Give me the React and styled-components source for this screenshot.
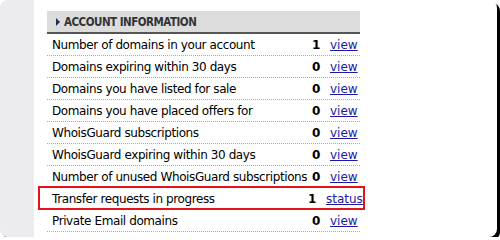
import React from "react";
import styled, { createGlobalStyle } from "styled-components";

const GlobalStyle = createGlobalStyle`
  html, body {
    margin: 0;
    padding: 0;
    background: #fff;
  }
`;

const Frame = styled.div`
  width: 497px;
  height: 237px;
  border-radius: 8px;
  box-shadow: 3px 3px 0 #000;
  overflow: hidden;
  display: flex;
  background: #fff;
  font-family: "DejaVu Sans", Verdana, sans-serif;
`;

const Sidebar = styled.div`
  width: 34px;
  background: #ececee;
`;

const Content = styled.div`
  padding: 11px 0 0 13px;
`;

const Panel = styled.div`
  width: 313px;
`;

const Header = styled.div`
  height: 21px;
  background: #dcdcdc;
  border-bottom: 2px solid #555;
  display: flex;
  align-items: center;
  padding-left: 9px;
  gap: 4px;
  font-family: "DejaVu Sans Condensed", "DejaVu Sans", sans-serif;
  font-size: 11.5px;
  letter-spacing: -0.5px;
  font-weight: bold;
  color: #333;
  text-transform: uppercase;
`;

const Arrow = styled.span`
  width: 0;
  height: 0;
  border-top: 4px solid transparent;
  border-bottom: 4px solid transparent;
  border-left: 4px solid #1c2e5a;
`;

const Row = styled.div`
  position: relative;
  height: 21px;
  display: flex;
  align-items: center;
  border-bottom: 1px dotted #aaa;
  font-size: 12px;
  letter-spacing: -0.4px;
  color: #000;

  ${(p) =>
    p.$highlight &&
    `
    &::after {
      content: "";
      position: absolute;
      left: -9px;
      right: -5px;
      top: -2px;
      bottom: -1px;
      border: 2px solid #e3141b;
    }
  `}
`;

const Label = styled.span`
  flex: 1;
  min-width: 0;
  padding-left: 5px;
  white-space: nowrap;
  overflow: hidden;
`;

const Count = styled.span`
  font-weight: bold;
  text-align: right;
  padding: 0 10px 0 3px;
`;

const Link = styled.a`
  width: ${(p) => (p.$wide ? "34px" : "30px")};
  color: #1a1aa6;
  text-decoration: underline;
  letter-spacing: 0;
  cursor: pointer;
`;

const rows = [
  { label: "Number of domains in your account", count: 1 },
  { label: "Domains expiring within 30 days", count: 0 },
  { label: "Domains you have listed for sale", count: 0 },
  { label: "Domains you have placed offers for", count: 0 },
  { label: "WhoisGuard subscriptions", count: 0 },
  { label: "WhoisGuard expiring within 30 days", count: 0 },
  { label: "Number of unused WhoisGuard subscriptions", count: 0 },
  { label: "Transfer requests in progress", count: 1, link: "status", highlight: true },
  { label: "Private Email domains", count: 0 },
];

export default function App() {
  return (
    <>
      <GlobalStyle />
      <Frame>
        <Sidebar />
        <Content>
          <Panel>
            <Header>
              <Arrow />
              Account Information
            </Header>
            {rows.map((r) => (
              <Row key={r.label} $highlight={r.highlight}>
                <Label>{r.label}</Label>
                <Count>{r.count}</Count>
                <Link $wide={!!r.link}>{r.link || "view"}</Link>
              </Row>
            ))}
          </Panel>
        </Content>
      </Frame>
    </>
  );
}
